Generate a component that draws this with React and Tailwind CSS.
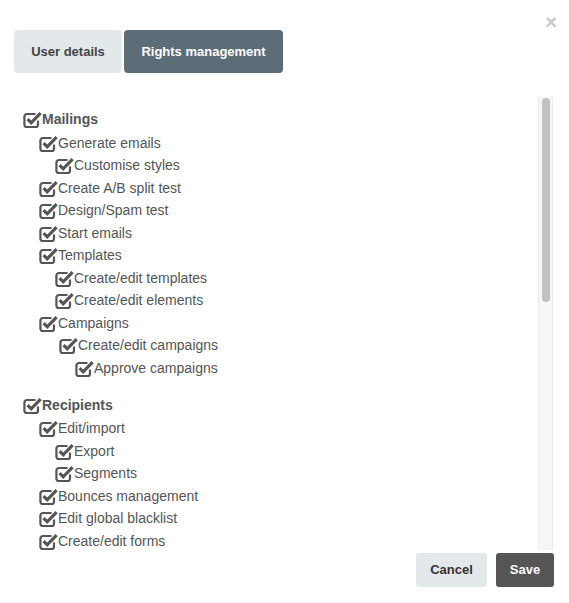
import React from "react";

const tree = [
  {
    label: "Mailings",
    children: [
      { label: "Generate emails", children: [{ label: "Customise styles" }] },
      { label: "Create A/B split test" },
      { label: "Design/Spam test" },
      { label: "Start emails" },
      {
        label: "Templates",
        children: [{ label: "Create/edit templates" }, { label: "Create/edit elements" }],
      },
      {
        label: "Campaigns",
        wide: true,
        children: [
          { label: "Create/edit campaigns", children: [{ label: "Approve campaigns" }] },
        ],
      },
    ],
  },
  {
    label: "Recipients",
    children: [
      { label: "Edit/import", children: [{ label: "Export" }, { label: "Segments" }] },
      { label: "Bounces management" },
      { label: "Edit global blacklist" },
      { label: "Create/edit forms" },
    ],
  },
];

function CheckIcon() {
  return (
    <svg width="19" height="17" viewBox="0 0 19 17" className="shrink-0">
      <path
        d="M12.5 3H4a2.6 2.6 0 0 0-2.6 2.6v8A2.6 2.6 0 0 0 4 16.2h8.4A2.6 2.6 0 0 0 15 13.6V9.5"
        fill="none"
        stroke="#555"
        strokeWidth="2.2"
      />
      <path d="M4.6 8.2l3.6 3.6L17.6 2.2" fill="none" stroke="#555" strokeWidth="3.2" />
    </svg>
  );
}

function Node({ node, depth }) {
  const top = depth === 0;
  return (
    <div>
      <div className={top ? "flex items-center h-[25px]" : "flex items-center h-[22.5px]"}>
        <CheckIcon />
        <span className={top ? "font-bold text-[14px]" : "text-[14px]"}>{node.label}</span>
      </div>
      {node.children && (
        <div className={node.wide ? "pl-[20px]" : "pl-[16px]"}>
          {node.children.map((c) => (
            <Node key={c.label} node={c} depth={depth + 1} />
          ))}
        </div>
      )}
    </div>
  );
}

export default function App() {
  return (
    <div
      className="w-[569px] h-[603px] bg-white relative text-[#555]"
      style={{ fontFamily: '"Liberation Sans", Arial, sans-serif' }}
    >
      {/* close */}
      <div className="absolute right-[12px] top-[12px] text-[#c8c8c8] text-[20px] font-bold leading-none">×</div>

      <div className="pt-[30px] pl-[14px] flex gap-[2px]">
        <button className="h-[43px] w-[108px] rounded-[4px] bg-[#e3e8ea] text-[#444] font-bold text-[13px]">
          User details
        </button>
        <button className="h-[43px] w-[159px] rounded-[4px] bg-[#5d6d78] text-white font-bold text-[13px]">
          Rights management
        </button>
      </div>

      <div className="mt-[24px] flex h-[453px] overflow-hidden">
        <div className="flex-1 pl-[23px] pt-[10px] overflow-hidden">
          {tree.map((n, i) => (
            <div key={n.label} className={i > 0 ? "mt-[13px]" : ""}>
              <Node node={n} depth={0} />
            </div>
          ))}
        </div>
        {/* scrollbar */}
        <div className="w-[15px] mr-[16px] bg-[#f6f6f6] border-x border-[#eaeaea] pt-[1px] flex justify-center">
          <div className="w-[8px] h-[204px] rounded-full bg-[#c1c1c1]" />
        </div>
      </div>

      <div className="flex justify-end gap-[9px] pr-[15px] mt-[3px]">
        <button className="h-[34px] w-[71px] rounded-[3px] bg-[#e3e8ea] text-[#333] font-bold text-[13px]">
          Cancel
        </button>
        <button className="h-[34px] w-[58px] rounded-[3px] bg-[#555] text-white font-bold text-[13px]">
          Save
        </button>
      </div>
    </div>
  );
}
